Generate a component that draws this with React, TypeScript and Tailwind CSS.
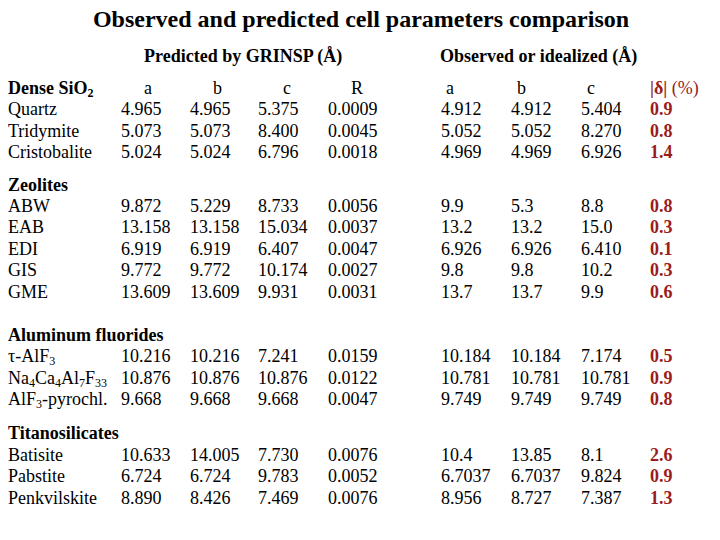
import type { ReactNode } from "react";

type Row = { name: ReactNode; pred: string[]; obs: string[]; d: string };
type Group = { title: ReactNode; gap: string; rows: Row[] };

// chemical-formula subscript
const S = ({ children }: { children: ReactNode }) => (
  <sub className="text-[12px] relative top-[3px] align-baseline leading-none">{children}</sub>
);

const groups: Group[] = [
  {
    title: (
      <>
        Dense SiO<S>2</S>
      </>
    ),
    gap: "mt-0",
    rows: [
      { name: "Quartz", pred: ["4.965", "4.965", "5.375", "0.0009"], obs: ["4.912", "4.912", "5.404"], d: "0.9" },
      { name: "Tridymite", pred: ["5.073", "5.073", "8.400", "0.0045"], obs: ["5.052", "5.052", "8.270"], d: "0.8" },
      { name: "Cristobalite", pred: ["5.024", "5.024", "6.796", "0.0018"], obs: ["4.969", "4.969", "6.926"], d: "1.4" },
    ],
  },
  {
    title: "Zeolites",
    gap: "mt-[11px]",
    rows: [
      { name: "ABW", pred: ["9.872", "5.229", "8.733", "0.0056"], obs: ["9.9", "5.3", "8.8"], d: "0.8" },
      { name: "EAB", pred: ["13.158", "13.158", "15.034", "0.0037"], obs: ["13.2", "13.2", "15.0"], d: "0.3" },
      { name: "EDI", pred: ["6.919", "6.919", "6.407", "0.0047"], obs: ["6.926", "6.926", "6.410"], d: "0.1" },
      { name: "GIS", pred: ["9.772", "9.772", "10.174", "0.0027"], obs: ["9.8", "9.8", "10.2"], d: "0.3" },
      { name: "GME", pred: ["13.609", "13.609", "9.931", "0.0031"], obs: ["13.7", "13.7", "9.9"], d: "0.6" },
    ],
  },
  {
    title: "Aluminum fluorides",
    gap: "mt-[22px]",
    rows: [
      {
        name: (
          <>
            τ-AlF<S>3</S>
          </>
        ),
        pred: ["10.216", "10.216", "7.241", "0.0159"],
        obs: ["10.184", "10.184", "7.174"],
        d: "0.5",
      },
      {
        name: (
          <>
            Na<S>4</S>Ca<S>4</S>Al<S>7</S>F<S>33</S>
          </>
        ),
        pred: ["10.876", "10.876", "10.876", "0.0122"],
        obs: ["10.781", "10.781", "10.781"],
        d: "0.9",
      },
      {
        name: (
          <>
            AlF<S>3</S>-pyrochl.
          </>
        ),
        pred: ["9.668", "9.668", "9.668", "0.0047"],
        obs: ["9.749", "9.749", "9.749"],
        d: "0.8",
      },
    ],
  },
  {
    title: "Titanosilicates",
    gap: "mt-[13px]",
    rows: [
      { name: "Batisite", pred: ["10.633", "14.005", "7.730", "0.0076"], obs: ["10.4", "13.85", "8.1"], d: "2.6" },
      { name: "Pabstite", pred: ["6.724", "6.724", "9.783", "0.0052"], obs: ["6.7037", "6.7037", "9.824"], d: "0.9" },
      { name: "Penkvilskite", pred: ["8.890", "8.426", "7.469", "0.0076"], obs: ["8.956", "8.727", "7.387"], d: "1.3" },
    ],
  },
];

const grid =
  "grid grid-cols-[113px_69px_68px_70px_113px_70px_70px_69px_1fr] h-[21.4px] leading-[21.4px] items-center whitespace-nowrap";

export default function App() {
  return (
    <div className="w-[720px] h-[540px] bg-white text-black overflow-hidden font-['Liberation_Serif','Times_New_Roman',serif]">
      <h1 className="text-center font-bold text-[24px] leading-none pt-[7px] pl-[2px]">
        Observed and predicted cell parameters comparison
      </h1>

      <div className="flex font-bold text-[18px] leading-none mt-[16px]">
        <div className="pl-[144px] w-[440px]">Predicted by GRINSP (Å)</div>
        <div>Observed or idealized (Å)</div>
      </div>

      <div className="pl-[8px] mt-[13px] text-[18px]">
        {groups.map((g, gi) => (
          <section key={gi} className={g.gap}>
            <div className={grid}>
              <div className="font-bold">{g.title}</div>
              {gi === 0 && (
                <>
                  <div className="pl-[23px]">a</div>
                  <div className="pl-[23px]">b</div>
                  <div className="pl-[25px]">c</div>
                  <div className="pl-[23px]">R</div>
                  <div className="pl-[5px]">a</div>
                  <div className="pl-[6px]">b</div>
                  <div className="pl-[6px]">c</div>
                  <div className="text-[#9a1c1c]">
                    <span className="font-bold">|δ|</span> (%)
                  </div>
                </>
              )}
            </div>
            {g.rows.map((r, ri) => (
              <div key={ri} className={grid}>
                <div>{r.name}</div>
                {r.pred.map((v, i) => (
                  <div key={i}>{v}</div>
                ))}
                {r.obs.map((v, i) => (
                  <div key={i}>{v}</div>
                ))}
                <div className="font-bold text-[#9a1c1c]">{r.d}</div>
              </div>
            ))}
          </section>
        ))}
      </div>
    </div>
  );
}
